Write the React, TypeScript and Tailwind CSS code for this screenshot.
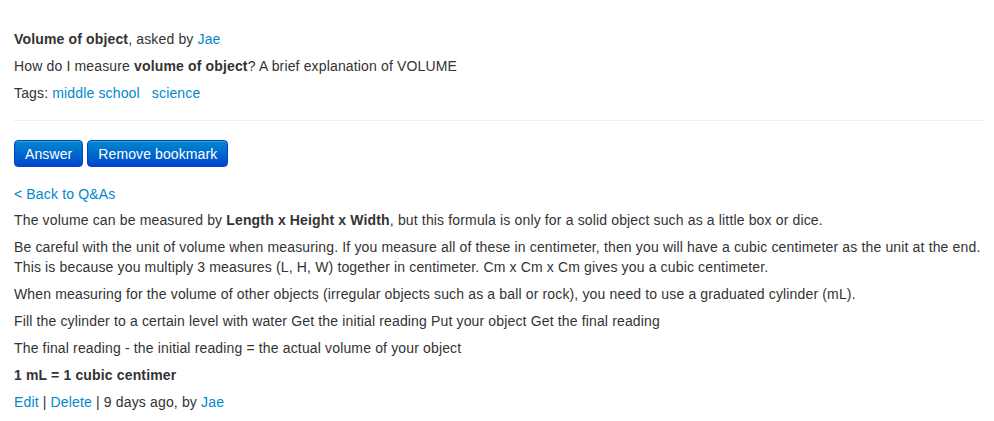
import React from "react";

const link = "text-[#0088cc] no-underline";

export default function App() {
  return (
    <div
      className="bg-white text-[#333] text-[14px] leading-[20px] tracking-[0.15px] pl-[14px] pr-[2px] pt-[29px] pb-[10px] min-h-[421px]"
      style={{ fontFamily: '"Liberation Sans", Arial, Helvetica, sans-serif' }}
    >
      <p className="mb-[7px]">
        <b>Volume of object</b>, asked by <a className={link} href="#">Jae</a>
      </p>
      <p className="mb-[7px]">
        How do I measure <b>volume of object</b>? A brief explanation of VOLUME
      </p>
      <p>
        Tags: <a className={link} href="#">middle school</a>
        <span className="inline-block w-[12px]" />
        <a className={link} href="#">science</a>
      </p>
      <div className="mt-[17px] h-px bg-[#eeeeee] w-[970px]" />
      <div className="mt-[19px] flex gap-[4px]">
        <button className="h-[27px] px-[10px] rounded-[4px] border border-[#0044cc] text-white text-[14px] leading-[20px] tracking-[0.1px] bg-gradient-to-b from-[#0088cc] to-[#0044cc] shadow-[inset_0_1px_0_rgba(255,255,255,0.2)]">
          Answer
        </button>
        <button className="h-[27px] px-[10px] rounded-[4px] border border-[#0044cc] text-white text-[14px] leading-[20px] tracking-[0.1px] bg-gradient-to-b from-[#0088cc] to-[#0044cc] shadow-[inset_0_1px_0_rgba(255,255,255,0.2)]">
          Remove bookmark
        </button>
      </div>
      <p className="mt-[17px] mb-[6px]">
        <a className={link} href="#">&lt; Back to Q&amp;As</a>
      </p>
      <p className="mb-[7px]">
        The volume can be measured by <b>Length x Height x Width</b>, but this formula is only for a solid object such as a little box or dice.
      </p>
      <p className="mb-[7px]">
        Be careful with the unit of volume when measuring. If you measure all of these in centimeter, then you will have a cubic centimeter as the unit at the end. This is because you multiply 3 measures (L, H, W) together in centimeter. Cm x Cm x Cm gives you a cubic centimeter.
      </p>
      <p className="mb-[7px]">
        When measuring for the volume of other objects (irregular objects such as a ball or rock), you need to use a graduated cylinder (mL).
      </p>
      <p className="mb-[7px]">
        Fill the cylinder to a certain level with water Get the initial reading Put your object Get the final reading
      </p>
      <p className="mb-[7px]">The final reading - the initial reading = the actual volume of your object</p>
      <p className="mb-[7px]">
        <b>1 mL = 1 cubic centimer</b>
      </p>
      <p>
        <a className={link} href="#">Edit</a> | <a className={link} href="#">Delete</a> | 9 days ago, by{" "}
        <a className={link} href="#">Jae</a>
      </p>
    </div>
  );
}
